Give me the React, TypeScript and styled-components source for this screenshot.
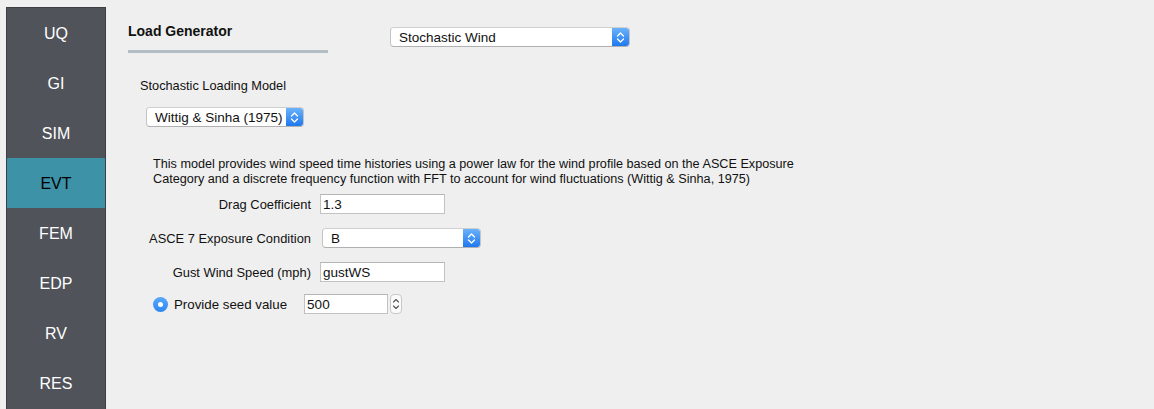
import React from "react";
import styled, { createGlobalStyle } from "styled-components";

const Global = createGlobalStyle`
  html, body { margin: 0; padding: 0; background: #efefef; }
  body { font-family: "Liberation Sans", Arial, Helvetica, sans-serif; color: #111; overflow: hidden; }
`;

const Page = styled.div`
  display: flex;
  align-items: flex-start;
  width: 1154px;
  height: 409px;
  background: #efefef;
  overflow: hidden;
`;

const Sidebar = styled.nav`
  box-sizing: border-box;
  margin: 7px 0 0 6px;
  width: 100px;
  height: 410px;
  background: #50535a;
  border: 1px solid #3b3e43;
  border-bottom: none;
  display: flex;
  flex-direction: column;
  flex-shrink: 0;
`;

const NavItem = styled.div<{ $active?: boolean }>`
  box-sizing: border-box;
  height: 50px;
  padding-top: 2px;
  display: flex;
  align-items: center;
  justify-content: center;
  font-size: 16px;
  color: ${(p) => (p.$active ? "#000" : "#fff")};
  background: ${(p) => (p.$active ? "#3e92a7" : "transparent")};
`;

const Main = styled.main`
  flex: 1;
  padding: 23px 0 0 22px;
  display: flex;
  flex-direction: column;
`;

const HeaderRow = styled.div`
  display: flex;
  align-items: flex-start;
`;

const TitleBlock = styled.div`
  width: 200px;
  display: flex;
  flex-direction: column;
`;

const Title = styled.div`
  font-size: 14px;
  font-weight: bold;
  line-height: 16px;
  color: #111;
`;

const Underline = styled.div`
  margin-top: 11px;
  height: 3px;
  background: #b3bec4;
`;

const ComboBox = styled.div<{ $w: number }>`
  box-sizing: border-box;
  width: ${(p) => p.$w}px;
  height: 20px;
  display: flex;
  align-items: stretch;
  background: #fff;
  border: 1px solid #c4c4c4;
  border-top-color: #cfcfcf;
  border-bottom-color: #b0b0b0;
  border-radius: 4px;
  overflow: hidden;
  font-size: 13.5px;
  color: #111;
`;

const ComboText = styled.span`
  flex: 1;
  display: flex;
  align-items: center;
  padding-left: 8px;
  white-space: nowrap;
`;

const ComboStepper = styled.span`
  width: 17px;
  display: flex;
  align-items: center;
  justify-content: center;
  background: linear-gradient(#6ab2fb, #1f78ee);
`;

const Chevrons = () => (
  <svg width="9" height="13" viewBox="0 0 9 13">
    <path d="M1.5 5 L4.5 2 L7.5 5" stroke="#fff" strokeWidth="1.3" fill="none" strokeLinecap="round" strokeLinejoin="round" />
    <path d="M1.5 8 L4.5 11 L7.5 8" stroke="#fff" strokeWidth="1.3" fill="none" strokeLinecap="round" strokeLinejoin="round" />
  </svg>
);

const Combo = ({ w, value }: { w: number; value: string }) => (
  <ComboBox $w={w}>
    <ComboText>{value}</ComboText>
    <ComboStepper>
      <Chevrons />
    </ComboStepper>
  </ComboBox>
);

const TopCombo = styled.div`
  margin: 4px 0 0 62px;
`;

const ModelSection = styled.section`
  margin-top: 26px;
  padding-left: 12px;
  display: flex;
  flex-direction: column;
  align-items: flex-start;
`;

const SectionLabel = styled.div`
  font-size: 12.75px;
  line-height: 14px;
`;

const ModelCombo = styled.div`
  margin: 14px 0 0 6px;
`;

const Params = styled.section`
  margin-top: 30px;
  padding-left: 25px;
  display: flex;
  flex-direction: column;
`;

const Description = styled.p`
  margin: 0;
  font-size: 12.65px;
  line-height: 14.5px;
  color: #111;
  white-space: nowrap;
`;

const FormGrid = styled.div`
  margin-top: 8px;
  display: grid;
  grid-template-columns: 158px auto;
  column-gap: 9px;
  row-gap: 14px;
  align-items: center;
  justify-items: start;
`;

const FieldLabel = styled.label`
  justify-self: end;
  font-size: 12.9px;
  line-height: 15px;
  white-space: nowrap;
`;

const TextInput = styled.div<{ $w: number }>`
  box-sizing: border-box;
  width: ${(p) => p.$w}px;
  height: 20px;
  background: #fff;
  border: 1px solid #c2c2c2;
  border-top-color: #b5b5b5;
  display: flex;
  align-items: center;
  padding-left: 2px;
  font-size: 13.5px;
  color: #111;
`;

const ComboCell = styled.div`
  margin-left: 2px;
`;

const SeedRow = styled.div`
  margin-top: 12px;
  display: flex;
  align-items: center;
`;

const Radio = styled.span`
  box-sizing: border-box;
  width: 15px;
  height: 15px;
  border-radius: 50%;
  background: linear-gradient(#5aa9fb, #2c86f2);
  display: flex;
  align-items: center;
  justify-content: center;
  &::after {
    content: "";
    width: 5px;
    height: 5px;
    border-radius: 50%;
    background: #fff;
  }
`;

const SeedLabel = styled.span`
  margin-left: 6px;
  font-size: 13.3px;
  white-space: nowrap;
`;

const SpinWrap = styled.div`
  margin-left: 17px;
  display: flex;
  align-items: center;
  gap: 2px;
`;

const SpinArrows = styled.span`
  box-sizing: border-box;
  width: 12px;
  height: 20px;
  border: 1px solid #c8c8c8;
  border-radius: 4px;
  background: #fafafa;
  display: flex;
  align-items: center;
  justify-content: center;
`;

const navItems = ["UQ", "GI", "SIM", "EVT", "FEM", "EDP", "RV", "RES"];

export default function App() {
  return (
    <>
      <Global />
      <Page>
        <Sidebar>
          {navItems.map((n) => (
            <NavItem key={n} $active={n === "EVT"}>
              {n}
            </NavItem>
          ))}
        </Sidebar>
        <Main>
          <HeaderRow>
            <TitleBlock>
              <Title>Load Generator</Title>
              <Underline />
            </TitleBlock>
            <TopCombo>
              <Combo w={240} value="Stochastic Wind" />
            </TopCombo>
          </HeaderRow>
          <ModelSection>
            <SectionLabel>Stochastic Loading Model</SectionLabel>
            <ModelCombo>
              <Combo w={158} value="Wittig & Sinha (1975)" />
            </ModelCombo>
          </ModelSection>
          <Params>
            <Description>
              This model provides wind speed time histories using a power law for the wind profile based on the ASCE Exposure
              <br />
              Category and a discrete frequency function with FFT to account for wind fluctuations (Wittig &amp; Sinha, 1975)
            </Description>
            <FormGrid>
              <FieldLabel>Drag Coefficient</FieldLabel>
              <TextInput $w={125}>1.3</TextInput>
              <FieldLabel>ASCE 7 Exposure Condition</FieldLabel>
              <ComboCell>
                <Combo w={159} value="B" />
              </ComboCell>
              <FieldLabel>Gust Wind Speed (mph)</FieldLabel>
              <TextInput $w={125}>gustWS</TextInput>
            </FormGrid>
            <SeedRow>
              <Radio />
              <SeedLabel>Provide seed value</SeedLabel>
              <SpinWrap>
                <TextInput $w={84}>500</TextInput>
                <SpinArrows>
                  <svg width="8" height="14" viewBox="0 0 8 14">
                    <path d="M1.5 5 L4 2.5 L6.5 5" stroke="#555" strokeWidth="1.1" fill="none" strokeLinecap="round" strokeLinejoin="round" />
                    <path d="M1.5 9 L4 11.5 L6.5 9" stroke="#555" strokeWidth="1.1" fill="none" strokeLinecap="round" strokeLinejoin="round" />
                  </svg>
                </SpinArrows>
              </SpinWrap>
            </SeedRow>
          </Params>
        </Main>
      </Page>
    </>
  );
}
